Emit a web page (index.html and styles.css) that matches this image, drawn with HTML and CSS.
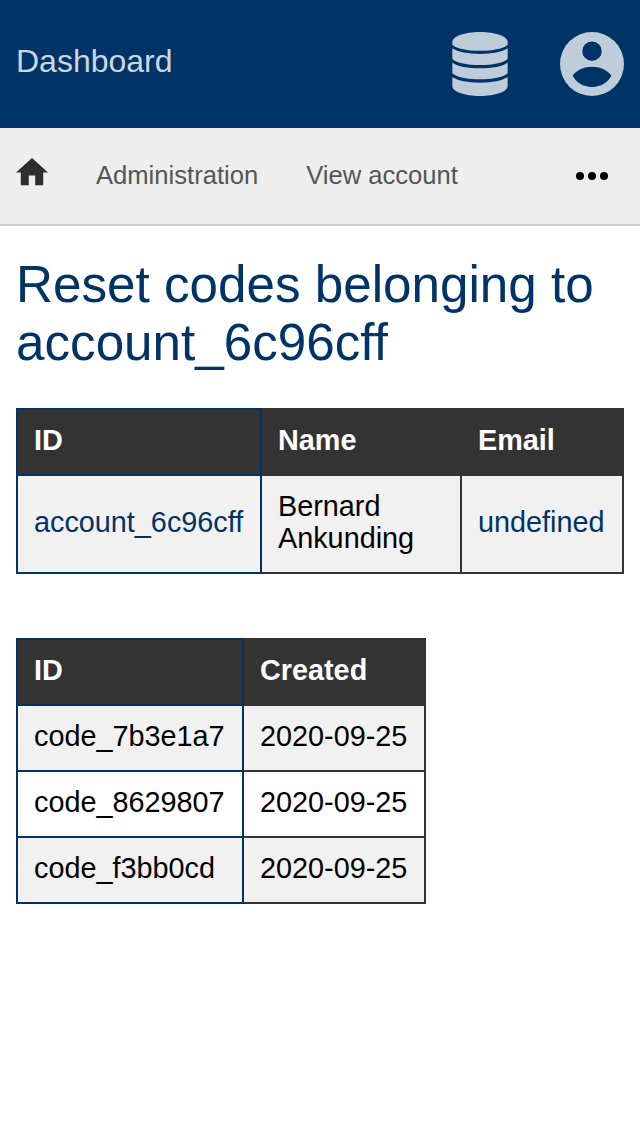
FILE: index.html
```html
<!DOCTYPE html>
<html lang="en">
<head>
<meta charset="utf-8">
<title>Dashboard</title>
<link rel="stylesheet" href="styles.css">
</head>
<body>
<header class="header">
  <a class="brand">Dashboard</a>
  <div class="menus">
    <svg class="database" viewBox="0 0 168 192"><path d="M1 30C1 13 38 0 84 0s83 13 83 30v8c-14 12-45 18-83 18S15 50 1 38z"/><path d="M1 49c16 11 47 17 83 17s67-6 83-17v32c-14 12-45 18-83 18S15 93 1 81z"/><path d="M1 92c16 11 47 17 83 17s67-6 83-17v32c-14 12-45 18-83 18S15 136 1 124z"/><path d="M1 135c16 11 47 17 83 17s67-6 83-17v27c0 17-37 30-83 30S1 179 1 162z"/></svg>
    <svg class="account" viewBox="2 2 20 20"><path fill-rule="evenodd" d="M12 2a10 10 0 1 0 0 20 10 10 0 0 0 0-20zm0 2.950a3.050 3.050 0 1 1 0 6.100 3.050 3.050 0 0 1 0-6.100zm0 7.900c3 0 5.400 1.550 6.050 2.850-1.050 2.050-3.250 3.500-6.050 3.500s-5-1.450-6.050-3.500c.65-1.300 3.050-2.850 6.050-2.850z"/></svg>
  </div>
</header>
<nav class="nav">
  <svg class="home" viewBox="2 3 20 17"><path d="M10 20v-6h4v6h5v-8h3L12 3 2 12h3v8z"/></svg>
  <a class="nav-link">Administration</a>
  <a class="nav-link">View account</a>
  <svg class="more" viewBox="0 0 32 8"><circle cx="4" cy="4" r="4"/><circle cx="16" cy="4" r="4"/><circle cx="28" cy="4" r="4"/></svg>
</nav>
<main class="content">
  <h1 class="title">Reset codes belonging to account_6c96cff</h1>
  <table class="table accounts">
    <thead><tr><th class="id">ID</th><th class="name">Name</th><th>Email</th></tr></thead>
    <tbody><tr><td class="id link">account_6c96cff</td><td>Bernard Ankunding</td><td class="link">undefined</td></tr></tbody>
  </table>
  <table class="table codes">
    <thead><tr><th class="id">ID</th><th>Created</th></tr></thead>
    <tbody>
      <tr><td class="id">code_7b3e1a7</td><td>2020-09-25</td></tr>
      <tr><td class="id">code_8629807</td><td>2020-09-25</td></tr>
      <tr><td class="id">code_f3bb0cd</td><td>2020-09-25</td></tr>
    </tbody>
  </table>
</main>
</body>
</html>
```
FILE: styles.css
```css
* { box-sizing: border-box; }
body { margin: 0; background: #fff; color: #000; font: 28.8px/32px "Liberation Sans", Arial, sans-serif; }
.header { display: flex; justify-content: space-between; align-items: center; height: 128px; padding: 0 16px; background: #036; color: #ccd6e0; }
.brand { font-size: 32px; line-height: 36px; padding-bottom: 6px; }
.menus { display: flex; align-items: center; gap: 52px; fill: #bfccd9; }
.database { width: 56px; height: 64px; }
.account { width: 64px; height: 64px; }
.nav { display: flex; align-items: center; gap: 48px; height: 98px; padding: 0 32px 0 16px; background: #eee; border-bottom: 2px solid #ccc; font-size: 25.6px; color: #555; }
.nav-link { padding-bottom: 2px; }
.home { width: 32px; height: 27.2px; fill: #2e2e2e; margin-top: -8px; }
.more { width: 32px; height: 8px; margin-left: auto; }
.content { padding: 30px 16px; }
.title { margin: 0 0 36px; color: #036; font-size: 51.2px; font-weight: 400; line-height: 58px; }
.table { table-layout: fixed; border-collapse: collapse; margin-bottom: 64px; }
.accounts { width: 608px; }
.accounts .id { width: 244px; }
.accounts .name { width: 200px; }
.codes { width: 410px; }
.codes .id { width: 226px; }
.table th, .table td { padding: 14px 16px 18px; text-align: left; border: 2px solid #333; }
.table th { background: #333; color: #fff; }
.table .id { border-color: #036; }
.table tbody tr:nth-child(odd) { background: #f1f1f1; }
.table .link { color: #036; }
```
